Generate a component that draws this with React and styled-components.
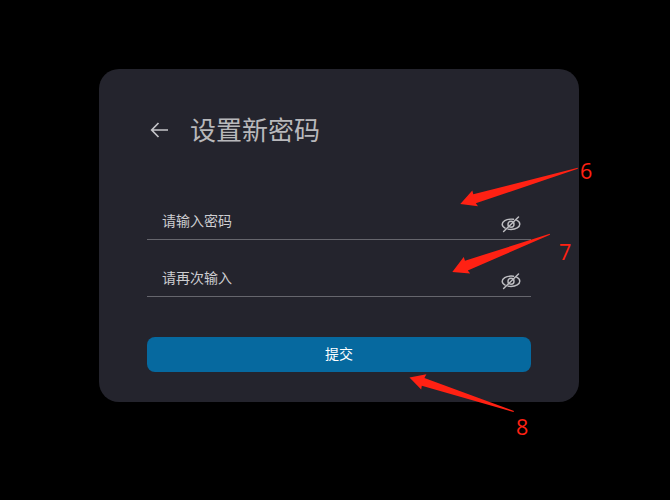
import React from "react";
import styled, { createGlobalStyle } from "styled-components";

const GlobalStyle = createGlobalStyle`
  * { box-sizing: border-box; }
  body {
    margin: 0;
    background: #000;
    font-family: "Noto Sans CJK SC", sans-serif;
  }
`;

const Page = styled.main`
  position: relative;
  width: 670px;
  height: 500px;
  padding: 69px 0 0 99px;
  overflow: hidden;
  background: #000;
`;

const Card = styled.form`
  display: flex;
  flex-direction: column;
  width: 480px;
  height: 333px;
  padding: 41px 48px 30px;
  border-radius: 20px;
  background: #24242d;
`;

const Header = styled.header`
  display: flex;
  align-items: center;
  height: 40px;
  margin-bottom: 52px;
`;

const BackButton = styled.button`
  display: flex;
  margin: 0 19px 0 0;
  padding: 0;
  border: 0;
  background: none;
  color: #c4c4c8;
`;

const Title = styled.h1`
  margin: 0;
  padding-bottom: 3px;
  color: #b8b8bb;
  font-size: 26px;
  font-weight: 400;
  line-height: 40px;
`;

const Field = styled.label`
  display: flex;
  align-items: center;
  justify-content: space-between;
  height: 38px;
  margin-bottom: 19px;
  padding: 0 9px 0 15px;
  border-bottom: 1px solid #66666d;
`;

const Placeholder = styled.span`
  padding-bottom: 2px;
  color: #cdcdd1;
  font-size: 14px;
  line-height: 20px;
`;

const EyeIcon = styled.svg`
  width: 22px;
  height: 20px;
  margin-top: 7px;
  fill: none;
  stroke: #bebec2;
  stroke-width: 1.45;
  stroke-linecap: round;
`;

const Submit = styled.button`
  height: 35px;
  margin-top: 21px;
  padding: 0 0 2px;
  border: 0;
  border-radius: 8px;
  background: #06699f;
  color: #fff;
  font: 400 14px/33px "Noto Sans CJK SC", sans-serif;
`;

const Annotations = styled.svg`
  position: absolute;
  inset: 0;
  fill: #ff2113;
  pointer-events: none;
`;

const Mark = styled.text`
  font-family: "Open Sans", "Noto Sans", sans-serif;
  font-size: 21.5px;
`;

function PasswordField({ children }) {
  return (
    <Field>
      <Placeholder>{children}</Placeholder>
      <EyeIcon viewBox="0 0 22 20" aria-hidden="true">
        <path d="M16.6 6.2C18.6 7.1 19.8 8.7 19.8 10.3C19.8 13.1 15.9 15.4 11 15.4C10 15.4 9 15.3 8.1 15.1M5.1 14.1C3.3 13.2 2.2 11.8 2.2 10.3C2.2 7.4 6.1 5.1 11 5.1C11.9 5.1 12.7 5.2 13.5 5.3" />
        <circle cx="11" cy="10.3" r="3" />
        <path d="M18.5 3L3.6 17.4" />
      </EyeIcon>
    </Field>
  );
}

export default function App() {
  return (
    <>
      <GlobalStyle />
      <Page>
        <Card>
          <Header>
            <BackButton type="button" aria-label="返回">
              <svg width="24" height="24" viewBox="0 0 24 24" fill="none" stroke="currentColor" strokeWidth="1.7">
                <path d="M21 12H4.9M11.5 5L4.7 12L11.5 19" />
              </svg>
            </BackButton>
            <Title>设置新密码</Title>
          </Header>
          <PasswordField>请输入密码</PasswordField>
          <PasswordField>请再次输入</PasswordField>
          <Submit type="button">提交</Submit>
        </Card>
        <Annotations width="670" height="500" viewBox="0 0 670 500">
          <path d="M460.3 204L472.3 190.5L473.3 194.3L577.8 167.7V168.8L475.8 203.3L478 206.3Z" />
          <path d="M452.3 272L463.7 257L465 260.7L549.8 233.8L550 234.8L467.8 270.5L470.2 273.4Z" />
          <path d="M409.5 377.6L426.4 374.2L424.4 377.9L514 411L513.5 412L421.8 385.7L421.2 389.6Z" />
          <Mark x="580" y="179">6</Mark>
          <Mark x="559" y="260">7</Mark>
          <Mark x="516" y="435">8</Mark>
        </Annotations>
      </Page>
    </>
  );
}
